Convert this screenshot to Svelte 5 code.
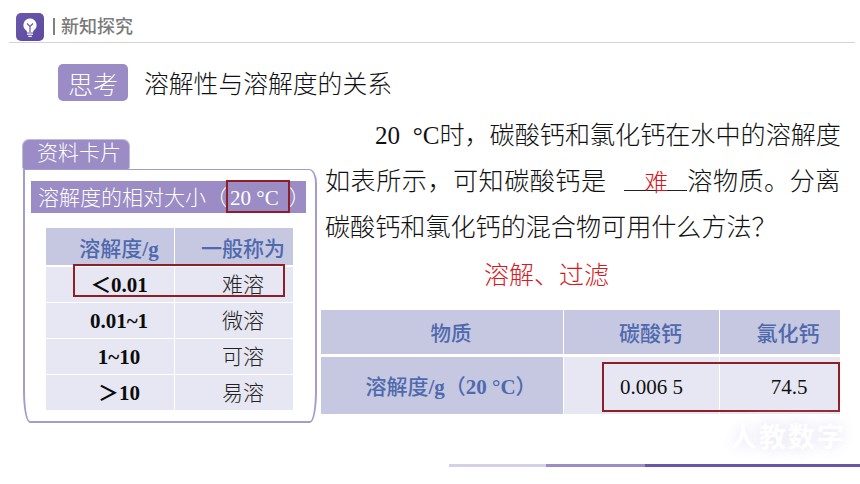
<script>
  const rows = [
    ['＜0.01', '难溶'],
    ['0.01~1', '微溶'],
    ['1~10', '可溶'],
    ['＞10', '易溶']
  ];
</script>

<div class="slide">
  <header class="head">
    <span class="logo">
      <svg viewBox="0 0 28 28" width="28" height="28" aria-hidden="true">
        <path d="M14 5.5a6.6 6.6 0 0 0-4 11.8c.8.7 1 1.3 1 2.2h6c0-.9.3-1.500 1-2.200A6.600 6.600 0 0 0 14 5.500z" fill="#fff"/>
        <path d="M11 10.500l3 3 3-3M14 13.500v5.500" fill="none" stroke="#6a55a8" stroke-width="1.200"/>
        <path d="M11 20.500h6v1.300h-6zM12.300 22.700h3.400v1.200h-3.400z" fill="#fff"/>
      </svg>
    </span>
    <span class="bar"></span>
    <span class="head-title">新知探究</span>
  </header>

  <div class="topic">
    <span class="badge">思考</span>
    <span class="topic-title">溶解性与溶解度的关系</span>
  </div>

  <div class="body">
    <section class="left">
      <div class="tab">资料卡片</div>
      <div class="card">
        <div class="card-head">
          溶解度的相对大小（<span class="latin temp">20 °C</span>）
          <span class="mark mark-head"></span>
        </div>
        <div class="small-table">
          <div class="st-row st-top">
            <div class="st-a hd">溶解度<b class="latin">/g</b></div>
            <div class="st-b hd">一般称为</div>
          </div>
          {#each rows as r}
            <div class="st-row">
              <div class="st-a val">{r[0]}</div>
              <div class="st-b">{r[1]}</div>
            </div>
          {/each}
          <span class="mark mark-row"></span>
        </div>
      </div>
    </section>

    <section class="right">
      <div class="para">
        <div class="line first"><span class="latin">20 &nbsp;°C</span>时，碳酸钙和氯化钙在水中的溶解度</div>
        <div class="line wide">如表所示，可知碳酸钙是 <span class="blank"><span class="ans">难</span></span>溶物质。分离</div>
        <div class="line">碳酸钙和氯化钙的混合物可用什么方法？</div>
        <div class="answer">溶解、过滤</div>
      </div>

      <div class="big-table">
        <div class="bt-row bt-top">
          <div class="c1 hd">物质</div>
          <div class="c2 hd">碳酸钙</div>
          <div class="c3 hd">氯化钙</div>
        </div>
        <div class="bt-row bt-val">
          <div class="c1 hd">溶解度<b class="latin">/g</b>（<b class="latin">20 °C</b>）</div>
          <div class="c2 num">0.006 5</div>
          <div class="c3 num">74.5</div>
        </div>
        <span class="mark mark-vals"></span>
      </div>
    </section>
  </div>

  <div class="brand">人教数字</div>
  <div class="progress"><i class="p1"></i><i class="p2"></i><i class="p3"></i></div>
</div>

<style>
  :global(body) { margin: 0; background: #fff; }
  .slide {
    position: relative;
    width: 860px;
    height: 484px;
    overflow: hidden;
    background: #fff;
    color: #111;
    font-family: "Liberation Serif", "Noto Sans CJK SC", serif;
    font-weight: 300;
  }
  .latin { font-family: "Liberation Serif", serif; }
  .head {
    display: flex;
    align-items: center;
    height: 29px;
    margin: 0 5px 0 9px;
    padding: 13px 0 0 7px;
    border-bottom: 1px solid #d4d4d4;
  }
  .logo {
    width: 28px;
    height: 28px;
    border-radius: 5px;
    background: linear-gradient(135deg, #6a58ac, #5d4aa0);
    display: block;
    flex: none;
    margin-top: -1px;
  }
  .logo svg { display: block; }
  .bar { width: 2px; height: 17px; background: #7f7f7f; margin: -3px 6px 0 9px; }
  .head-title {
    font-family: "Noto Sans CJK SC", sans-serif;
    font-size: 18px;
    font-weight: 500;
    color: #7a7a7a;
    line-height: 24px;
    margin-top: -6px;
  }
  .topic {
    display: flex;
    align-items: center;
    gap: 16px;
    margin: 21px 0 0 58px;
    height: 37px;
  }
  .badge {
    width: 70px;
    height: 37px;
    border-radius: 5px;
    background: #9b8cc5;
    color: #fff;
    font-size: 25px;
    line-height: 43px;
    text-align: center;
  }
  .topic-title { font-size: 24.800px; line-height: 41px; height: 37px; color: #111; }
  .body {
    display: grid;
    grid-template-columns: 295px 519px;
    column-gap: 3px;
    margin: 16px 0 0 23px;
  }
  .left { padding-top: 22px; }
  .tab {
    width: 108px;
    height: 30px;
    margin-left: -1px;
    border: 1px solid #c3bbdc;
    border-bottom: 0;
    border-radius: 7px 7px 2px 2px;
    background: #9b8cc5;
    color: #fff;
    font-size: 21px;
    line-height: 26px;
    padding-left: 14px;
    box-sizing: border-box;
  }
  .card {
    position: relative;
    box-sizing: border-box;
    width: 294px;
    height: 254px;
    border: 2px solid #a79bcd;
    border-top-width: 1.500px;
    border-radius: 0 8px 7px 7px / 0 14px 32px 32px;
    padding: 11px 0 0 6px;
  }
  .card-head {
    position: relative;
    width: 275px;
    height: 32px;
    padding-left: 7px;
    box-sizing: border-box;
    background: #9b8cc5;
    color: #fff;
    font-size: 21px;
    line-height: 34px;
    white-space: nowrap;
  }
  .temp { margin: 0 10px 0 3px; }
  .mark {
    position: absolute;
    box-sizing: border-box;
    border: 2px solid #8f1f26;
    pointer-events: none;
  }
  .mark-head { left: 195px; top: -1px; width: 64px; height: 33px; }
  .small-table {
    position: relative;
    width: 247px;
    margin: 15px 0 0 15px;
    background: #fff;
  }
  .st-row {
    display: grid;
    grid-template-columns: 128px 118px;
    grid-template-rows: 35px;
    column-gap: 1px;
    height: 35px;
    margin-bottom: 1px;
    background: #fff;
  }
  .st-row.st-top { height: 37px; grid-template-rows: 37px; margin-bottom: 2px; }
  .st-row:last-of-type { margin-bottom: 0; }
  .st-a, .st-b {
    background: #e7e7f3;
    text-align: center;
    font-size: 21px;
    line-height: 37px;
    color: #222;
    box-sizing: border-box;
  }
  .st-b { padding-left: 18px; }
  .st-a { padding-left: 18px; }
  .val { font-weight: 700; font-size: 21px; color: #0c0c0c; }
  .st-top > div { line-height: 42px; }
  .hd {
    background: #c5c8e0;
    color: #4f69ae;
    font-size: 21px;
    font-weight: 500;
  }
  .mark-row { left: 27px; top: 36px; width: 212px; height: 33px; }
  .right { min-width: 0; margin-left: 0; }
  .para {
    font-size: 25.100px;
    line-height: 46px;
    padding: 0 0 0 4px;
    margin-top: -4px;
    color: #111;
    height: 197px;
    box-sizing: border-box;
    white-space: nowrap;
  }
  .first { padding-left: 50px; }
  .wide { letter-spacing: 0.5px; }
  .blank {
    position: relative;
    display: inline-block;
    width: 63px;
    height: 30px;
    margin-left: 11px;
    vertical-align: -1px;
    border-bottom: 1.500px solid #222;
    box-sizing: border-box;
  }
  .ans {
    position: absolute;
    left: 20px;
    top: -1px;
    color: #d8141c;
    font-size: 24px;
    line-height: 46px;
    letter-spacing: 0;
  }
  .answer {
    color: #d41a22;
    padding-left: 159px;
    margin-top: 2px;
    font-size: 25px;
  }
  .big-table { position: relative; width: 519px; }
  .bt-row {
    display: grid;
    grid-template-columns: 242px 155px 120px;
    column-gap: 1px;
  }
  .bt-top { height: 44px; grid-template-rows: 44px; margin-bottom: 3px; }
  .bt-val { height: 57px; grid-template-rows: 57px; }
  .bt-row > div { text-align: center; font-size: 21px; line-height: 48px; box-sizing: border-box; }
  .bt-val > div { line-height: 60px; }
  .c2 { background: #e7e7f3; padding-left: 18px; }
  .c3 { background: #e7e7f3; padding-left: 16px; }
  .bt-top .c2, .bt-top .c3 { background: #c5c8e0; }
  .bt-row .num { font-size: 21px; color: #111; font-weight: 400; line-height: 60px; }
  .bt-row .c2.num { padding-left: 20px; }
  .bt-row .c3.num { padding-left: 18px; }
  .bt-row .c1 { padding-left: 18px; }
  .bt-top .c1 { font-size: 20.500px; }
  .hd b { font-weight: 700; }
  .mark-vals { left: 281px; top: 52px; width: 238px; height: 50px; }
  .brand {
    position: absolute;
    right: 14px;
    top: 418px;
    font-family: "Noto Sans CJK SC", sans-serif;
    font-weight: 700;
    font-size: 27px;
    line-height: 36px;
    letter-spacing: 2px;
    color: #fff;
    text-shadow: 0 0 14px #e8e4f4, 0 0 26px #f0eef8;
  }
  .progress {
    position: absolute;
    left: 449px;
    right: 0;
    top: 464px;
    height: 3px;
    display: flex;
  }
  .progress i { display: block; height: 100%; }
  .p1 { width: 97px; background: #d5cfe8; }
  .p2 { width: 99px; background: #9b8cc5; }
  .p3 { flex: 1; background: #6a55a8; }
</style>
